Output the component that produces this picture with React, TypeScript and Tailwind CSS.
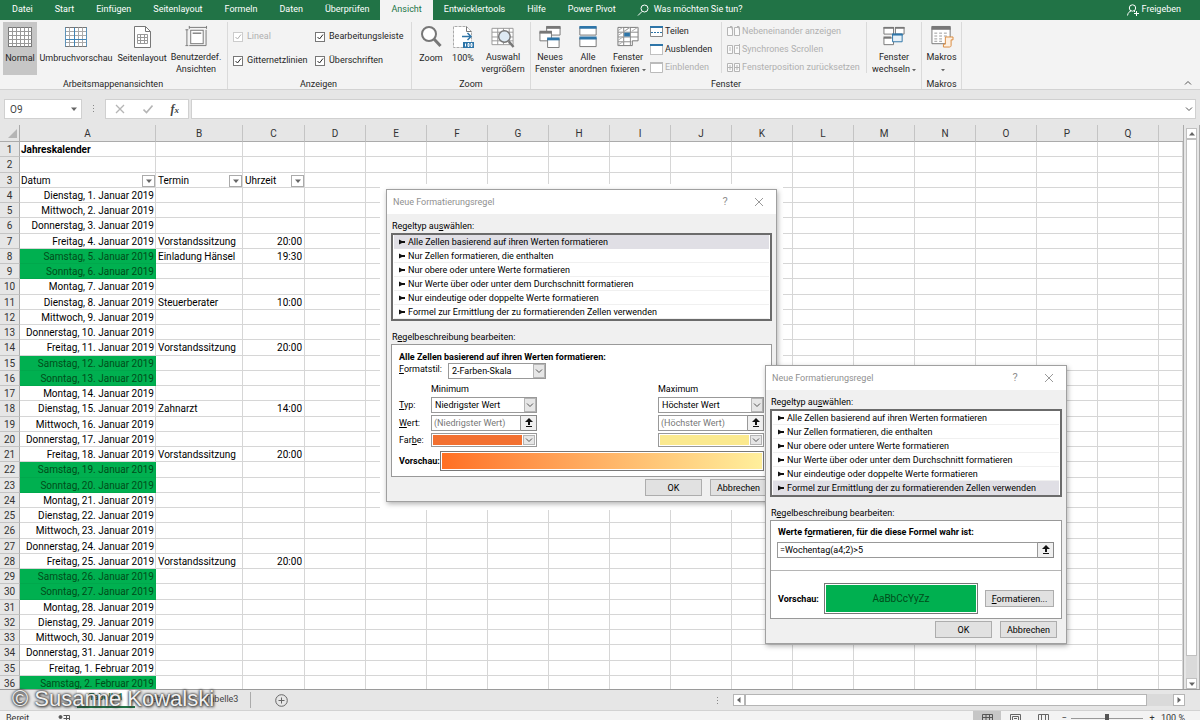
import React from 'react';
import clsx from 'clsx';

const columns = ['A', 'B', 'C', 'D', 'E', 'F', 'G', 'H', 'I', 'J', 'K', 'L', 'M', 'N', 'O', 'P', 'Q'];

interface Entry {
  date: string;
  weekend?: boolean;
  event?: string;
  time?: string;
}

const entries: Entry[] = [
  { date: 'Dienstag, 1. Januar 2019' },
  { date: 'Mittwoch, 2. Januar 2019' },
  { date: 'Donnerstag, 3. Januar 2019' },
  { date: 'Freitag, 4. Januar 2019', event: 'Vorstandssitzung', time: '20:00' },
  { date: 'Samstag, 5. Januar 2019', weekend: true, event: 'Einladung Hänsel', time: '19:30' },
  { date: 'Sonntag, 6. Januar 2019', weekend: true },
  { date: 'Montag, 7. Januar 2019' },
  { date: 'Dienstag, 8. Januar 2019', event: 'Steuerberater', time: '10:00' },
  { date: 'Mittwoch, 9. Januar 2019' },
  { date: 'Donnerstag, 10. Januar 2019' },
  { date: 'Freitag, 11. Januar 2019', event: 'Vorstandssitzung', time: '20:00' },
  { date: 'Samstag, 12. Januar 2019', weekend: true },
  { date: 'Sonntag, 13. Januar 2019', weekend: true },
  { date: 'Montag, 14. Januar 2019' },
  { date: 'Dienstag, 15. Januar 2019', event: 'Zahnarzt', time: '14:00' },
  { date: 'Mittwoch, 16. Januar 2019' },
  { date: 'Donnerstag, 17. Januar 2019' },
  { date: 'Freitag, 18. Januar 2019', event: 'Vorstandssitzung', time: '20:00' },
  { date: 'Samstag, 19. Januar 2019', weekend: true },
  { date: 'Sonntag, 20. Januar 2019', weekend: true },
  { date: 'Montag, 21. Januar 2019' },
  { date: 'Dienstag, 22. Januar 2019' },
  { date: 'Mittwoch, 23. Januar 2019' },
  { date: 'Donnerstag, 24. Januar 2019' },
  { date: 'Freitag, 25. Januar 2019', event: 'Vorstandssitzung', time: '20:00' },
  { date: 'Samstag, 26. Januar 2019', weekend: true },
  { date: 'Sonntag, 27. Januar 2019', weekend: true },
  { date: 'Montag, 28. Januar 2019' },
  { date: 'Dienstag, 29. Januar 2019' },
  { date: 'Mittwoch, 30. Januar 2019' },
  { date: 'Donnerstag, 31. Januar 2019' },
  { date: 'Freitag, 1. Februar 2019' },
  { date: 'Samstag, 2. Februar 2019', weekend: true }
];

const ruleTypes = [
  'Alle Zellen basierend auf ihren Werten formatieren',
  'Nur Zellen formatieren, die enthalten',
  'Nur obere oder untere Werte formatieren',
  'Nur Werte über oder unter dem Durchschnitt formatieren',
  'Nur eindeutige oder doppelte Werte formatieren',
  'Formel zur Ermittlung der zu formatierenden Zellen verwenden'
];

/* ---------- Icons ---------- */

const Icon = ({ children }: { children: React.ReactNode }) => (
  <svg viewBox="0 0 24 24" className="w-6 h-6" fill="none" stroke="#777" strokeWidth="1" aria-hidden="true">
    {children}
  </svg>
);

const NormalIcon = () => (
  <Icon>
    <rect x="0.5" y="2.5" width="23" height="19" fill="#fff" />
    <path d="M4.5 2.5v19M8.5 2.5v19M12.5 2.5v19M16.5 2.5v19M20.5 2.5v19M.5 6.5h23M.5 10.5h23M.5 14.5h23M.5 18.5h23" stroke="#999" />
  </Icon>
);

const PageBreakIcon = () => (
  <Icon>
    <rect x="1.5" y="2.5" width="21" height="19" fill="#fff" />
    <path d="M5.5 2.5v19M14.5 2.5v19M18.5 2.5v19M1.5 6.5h21M1.5 10.5h21M1.5 17.5h21" stroke="#aaa" />
    <path d="M10.5 2.5v19M1.5 14.5h21" stroke="#3f83b5" />
    <path d="M1.5 2.5v19M22.5 2.5v19" stroke="#5d93ba" />
  </Icon>
);

const PageLayoutIcon = () => (
  <Icon>
    <path d="M4.5 1.5h11l5 5v16h-16z" fill="#fff" />
    <path d="M15.5 1.5v5h5" />
    <path d="M7.5 9.5h10v9h-10zM10.5 9.5v9M14.5 9.5v9M7.5 12.5h10M7.5 15.5h10" stroke="#999" />
  </Icon>
);

const CustomViewIcon = () => (
  <Icon>
    <rect x="6.5" y="5.5" width="13" height="14" fill="#fff" />
    <path d="M5 2.5h18M5 1v3M23 1v3M2.5 5v16M1 5h3M1 21.5h3M22.5 5v16.5H5" />
    <path d="M8.5 8.5h9" stroke="#444" />
  </Icon>
);

const ZoomIcon = () => (
  <Icon>
    <circle cx="10" cy="9" r="7" fill="#fff" strokeWidth="2" />
    <path d="M15 14l6.5 7" strokeWidth="3" />
  </Icon>
);

const HundredIcon = () => (
  <Icon>
    <path d="M16.5 22.5h-14v-21h13l5 5v10" fill="#fff" stroke="#aaa" strokeDasharray="3 1" />
    <path d="M15.5 1.5v5h5" />
    <path d="M11 11.5h9M16.5 8l3.5 3.5-3.5 3.5" stroke="#2e75a8" strokeWidth="1.5" />
    <rect x="12" y="17" width="11" height="6" fill="#2e75a8" stroke="none" />
    <path d="M14.5 18.5v3M17 18.5h1v3h-1zM20 18.5h1v3h-1z" stroke="#fff" />
  </Icon>
);

const ZoomSelectionIcon = () => (
  <Icon>
    <path d="M.5 3.5h22v17H.5zM.5 7.5h22M.5 12.5h22M.5 16.5h22M6.5 3.5v17M12.5 3.5v17M18.5 3.5v17" fill="#fff" stroke="#999" />
    <circle cx="13.5" cy="12" r="6" fill="#deeaf3" strokeWidth="1.5" />
    <path d="M18 17l5 6" strokeWidth="2.5" />
  </Icon>
);

const NewWindowIcon = () => (
  <Icon>
    <path d="M8.5 2.5h14v8h-14z" fill="#fff" />
    <path d="M8 2.5h15" strokeWidth="3" />
    <path d="M1.5 7.5h12v9h-12z" fill="#fff" />
    <path d="M1 7.5h13" strokeWidth="3" />
    <path d="M9.5 14.5h12v9h-12z" fill="#fff" />
    <path d="M9 14.5h13" stroke="#2e75a8" strokeWidth="3" />
  </Icon>
);

const ArrangeIcon = () => (
  <Icon>
    <path d="M3.5 2.5h17v8h-17zM3.5 13.5h17v9h-17z" fill="#fff" />
    <path d="M3 2.5h18M3 13.5h18" stroke="#2e75a8" strokeWidth="3" />
  </Icon>
);

const FreezeIcon = () => (
  <Icon>
    <path d="M1.5 2.5h21v14h-6v5h-15z" fill="#fff" />
    <path d="M1.5 7.5h21M1.5 12.5h21M1.5 17.5h14M7.5 2.5v19M14.5 2.5v19" stroke="#888" />
    <path d="M1.5 6l5-3.5M1.5 11l12-8M8 6.5l6-4M16 6.5l6-4M1.5 16l6-4M1.5 21l6-4" stroke="#aaa" />
    <rect x="8" y="8" width="6" height="4" fill="#2e75a8" stroke="none" />
  </Icon>
);

const SwitchIcon = () => (
  <Icon>
    <path d="M1.5 2.5h10v7h-10zM13.5 2.5h9v7h-9zM1.5 13.5h10v7h-10z" fill="#fff" />
    <path d="M1 3h11M13 3h10M1 13h8" strokeWidth="2" />
    <path d="M10.5 9.5h10v8h-10z" fill="#e8f1f8" stroke="#2e75a8" />
    <path d="M10 10h11" stroke="#2e75a8" strokeWidth="2" />
  </Icon>
);

const MacroIcon = () => (
  <Icon>
    <path d="M1.5 2.5h19v17h-19z" fill="#fff" />
    <path d="M1 3h20" strokeWidth="4" />
    <path d="M4 8.5h3M9 8.5h3M14 8.5h3M4 11.5h3M9 11.5h3M14 11.5h3M4 14.5h3M9 14.5h3M4 17h3M9 17h3" stroke="#999" />
    <path d="M15.5 12.5h8v3h-2v6c0 1-1 1.5-2 1.5h-6v-3h2z" fill="#fdf0e2" stroke="#d98a3d" />
  </Icon>
);

const SmallWindowIcon = ({ kind }: { kind: 'split' | 'hide' | 'show' }) => (
  <svg viewBox="0 0 13 11" className="w-[13px] h-[11px] shrink-0" fill="none" stroke={kind === 'show' ? '#bbb' : '#888'} aria-hidden="true">
    <path d="M.5 .5h12v10H.5z" fill="#fff" strokeDasharray={kind === 'hide' ? '1 1' : undefined} />
    <path d="M0 1h13" strokeWidth="2" stroke={kind === 'show' ? '#bbb' : '#2e75a8'} />
    {kind === 'split' && <path d="M1 6.5h11" strokeDasharray="2 1" stroke="#2e75a8" />}
  </svg>
);

const PairIcon = ({ kind }: { kind: 'side' | 'sync' | 'reset' }) => (
  <svg viewBox="0 0 13 11" className="w-[13px] h-[11px] shrink-0" fill="none" stroke="#b5b5b5" aria-hidden="true">
    <path d="M.5 1.5h5v8h-5zM7.5 1.5h5v8h-5z" fill="#fafafa" />
    {kind === 'side' && <path d="M3 .5h2v3M10 .5h2v3" />}
    {kind === 'sync' && <path d="M2 4h2M2 6h2M9 4h2M12.5 0v11" />}
    {kind === 'reset' && <path d="M0 5.5h5M7 5.5h6M3 3v5M10 3v5" />}
  </svg>
);

const Chevron = ({ className }: { className?: string }) => (
  <svg viewBox="0 0 8 8" className={clsx('w-2 h-2 text-[#555]', className)} fill="none" stroke="currentColor" aria-hidden="true">
    <path d="M1 2.5l3 3 3-3" />
  </svg>
);

const Triangle = ({ className, small }: { className?: string; small?: boolean }) => (
  <svg viewBox="0 0 6 6" className={clsx('inline-block', small ? 'w-1 h-1' : 'w-1.5 h-1.5', className)} fill="#666" aria-hidden="true">
    <path d="M0 1.5h6l-3 3.5z" />
  </svg>
);

const RefIcon = () => (
  <svg viewBox="0 0 10 10" className="w-2.5 h-2.5" fill="#111" aria-hidden="true">
    <path d="M5 0l4 4H6v3H4V4H1zM2 8h6v1H2z" />
  </svg>
);

/* ---------- Ribbon ---------- */

const tabs = ['Datei', 'Start', 'Einfügen', 'Seitenlayout', 'Formeln', 'Daten', 'Überprüfen', 'Ansicht', 'Entwicklertools', 'Hilfe', 'Power Pivot'];

const TabBar = () => (
  <nav className="h-5 shrink-0 flex items-stretch bg-[#217346] text-white text-[9px] pl-px">
    {tabs.map((tab) => (
      <button
        key={tab}
        className={clsx('px-[11px] pb-px whitespace-nowrap', tab === 'Ansicht' && 'bg-[#f3f3f3] text-[#217346]')}
      >
        {tab}
      </button>
    ))}
    <button className="flex items-center gap-[5px] px-[10px] pb-px whitespace-nowrap">
      <svg viewBox="0 0 12 12" className="w-3 h-3" fill="none" stroke="currentColor" aria-hidden="true">
        <circle cx="7.5" cy="4.5" r="3.5" />
        <path d="M5 7.5l-4 4" />
      </svg>
      Was möchten Sie tun?
    </button>
    <button className="ml-auto mr-[9px] px-[10px] pb-px flex items-center gap-[3px]">
      <svg viewBox="0 0 12 12" className="w-3 h-3" fill="none" stroke="currentColor" aria-hidden="true">
        <circle cx="5.5" cy="4" r="3.2" />
        <path d="M.5 11.5c.5-3 2-4 3.5-4.5M7 7l1 1M9.5 7v5M7 9.5h5" />
      </svg>
      Freigeben
    </button>
  </nav>
);

interface BigButtonProps {
  icon: React.ReactNode;
  lines: string[];
  width: string;
  active?: boolean;
  menu?: boolean;
}

const BigButton = ({ icon, lines, width, active, menu }: BigButtonProps) => (
  <button className={clsx('h-[53px] pt-[3px] flex flex-col items-center shrink-0', width, active && 'bg-[#c6c6c6]')}>
    {icon}
    <span className="pt-[3px] leading-3 whitespace-nowrap">
      {lines[0]}
      {(lines[1] || menu) && <br />}
      {lines[1]}
      {menu && <Triangle small className="ml-[2px]" />}
    </span>
  </button>
);

const Group = ({ label, children, className }: { label: string; children: React.ReactNode; className?: string }) => (
  <section className={clsx('flex flex-col border-r border-[#dadada] mt-[2px]', className)}>
    <div className="flex h-[57px]">{children}</div>
    <div className="text-center leading-[10px]">{label}</div>
  </section>
);

const Check = ({ label, disabled }: { label: string; disabled?: boolean }) => (
  <label className={clsx('flex items-center gap-1 h-3 whitespace-nowrap', disabled && 'text-[#b0b0b0]')}>
    <span className="relative flex">
      <input
        type="checkbox"
        defaultChecked
        disabled={disabled}
        className="appearance-none w-[10px] h-[10px] border border-[#777] bg-white disabled:border-[#ccc]"
      />
      <svg viewBox="0 0 10 10" className="absolute inset-0 w-[10px] h-[10px] pointer-events-none" fill="none" stroke="currentColor" aria-hidden="true">
        <path d="M2.5 5l2 2 3.5-4.5" />
      </svg>
    </span>
    {label}
  </label>
);

const Ribbon = () => (
  <div className="h-[70px] shrink-0 flex bg-[#f3f3f3] border-b border-[#d2d2d2] text-[9px] text-[#262626]">
    <Group label="Arbeitsmappenansichten" className="pl-[3px] pr-[4px]">
      <BigButton icon={<NormalIcon />} lines={['Normal']} width="w-[34px]" active />
      <BigButton icon={<PageBreakIcon />} lines={['Umbruchvorschau']} width="w-[78px]" />
      <BigButton icon={<PageLayoutIcon />} lines={['Seitenlayout']} width="w-[54px]" />
      <BigButton icon={<CustomViewIcon />} lines={['Benutzerdef.', 'Ansichten']} width="w-[54px]" />
    </Group>
    <Group label="Anzeigen" className="pl-[5px] pr-[7px]">
      <div className="grid grid-cols-[82px_89px] gap-y-3 content-start pt-[9px]">
        <Check label="Lineal" disabled />
        <Check label="Bearbeitungsleiste" />
        <Check label="Gitternetzlinien" />
        <Check label="Überschriften" />
      </div>
    </Group>
    <Group label="Zoom" className="px-[2px]">
      <BigButton icon={<ZoomIcon />} lines={['Zoom']} width="w-[34px]" />
      <BigButton icon={<HundredIcon />} lines={['100%']} width="w-[30px]" />
      <BigButton icon={<ZoomSelectionIcon />} lines={['Auswahl', 'vergrößern']} width="w-[50px]" />
    </Group>
    <Group label="Fenster">
      <BigButton icon={<NewWindowIcon />} lines={['Neues', 'Fenster']} width="w-[38px]" />
      <BigButton icon={<ArrangeIcon />} lines={['Alle', 'anordnen']} width="w-[38px]" />
      <BigButton icon={<FreezeIcon />} lines={['Fenster', 'fixieren']} width="w-[42px]" menu />
      <div className="w-[73px] h-[51px] pl-[1px] flex flex-col justify-between border-r border-[#dadada] pt-[3px]">
        <button className="flex items-center gap-[2px] leading-3"><SmallWindowIcon kind="split" />Teilen</button>
        <button className="flex items-center gap-[2px] leading-3"><SmallWindowIcon kind="hide" />Ausblenden</button>
        <button disabled className="flex items-center gap-[2px] leading-3 text-[#b0b0b0]"><SmallWindowIcon kind="show" />Einblenden</button>
      </div>
      <div className="w-[145px] h-[51px] pl-[5px] flex flex-col justify-between border-r border-[#dadada] pt-[3px] text-[#b0b0b0] whitespace-nowrap">
        <button disabled className="flex items-center gap-[2px] leading-3"><PairIcon kind="side" />Nebeneinander anzeigen</button>
        <button disabled className="flex items-center gap-[2px] leading-3"><PairIcon kind="sync" />Synchrones Scrollen</button>
        <button disabled className="flex items-center gap-[2px] leading-3"><PairIcon kind="reset" />Fensterposition zurücksetzen</button>
      </div>
      <BigButton icon={<SwitchIcon />} lines={['Fenster', 'wechseln']} width="w-[54px]" menu />
    </Group>
    <Group label="Makros">
      <BigButton icon={<MacroIcon />} lines={['Makros']} width="w-[39px]" menu />
    </Group>
    <button aria-label="Menüband reduzieren" className="ml-auto self-end mr-[8px] mb-[2px]">
      <Chevron className="rotate-180" />
    </button>
  </div>
);

const FormulaBar = () => (
  <div className="h-[35px] shrink-0 flex items-start pt-[9px] px-1 bg-[#e6e6e6] text-[#444]">
    <div className="relative w-[78px] shrink-0">
      <input aria-label="Namenfeld" defaultValue="O9" className="block w-full h-5 px-[5px] bg-white border border-[#d0d0d0] text-[10px]" />
      <Triangle className="absolute right-[5px] top-[7px]" />
    </div>
    <span className="w-[23px] shrink-0 flex flex-col items-center gap-[2px] pt-[6px]">
      <i className="w-px h-px bg-[#888]" />
      <i className="w-px h-px bg-[#888]" />
      <i className="w-px h-px bg-[#888]" />
    </span>
    <div className="w-[84px] h-5 shrink-0 flex items-center justify-around bg-white border border-[#d0d0d0]">
      <button aria-label="Abbrechen">
        <svg viewBox="0 0 10 10" className="w-2.5 h-2.5" fill="none" stroke="#b5b5b5" strokeWidth="1.3" aria-hidden="true">
          <path d="M1 1l8 8M9 1l-8 8" />
        </svg>
      </button>
      <button aria-label="Eingeben">
        <svg viewBox="0 0 10 10" className="w-2.5 h-2.5" fill="none" stroke="#b5b5b5" strokeWidth="1.6" aria-hidden="true">
          <path d="M.5 5.5l3 3 6-7" />
        </svg>
      </button>
      <button className="font-['Liberation_Serif',serif] italic font-bold text-[12px] leading-none">
        f<span className="text-[9px]">x</span>
      </button>
    </div>
    <div className="relative flex-1 ml-[2px]">
      <input aria-label="Bearbeitungsleiste" className="block w-full h-5 px-1 bg-white border border-[#d0d0d0] text-[10px]" />
      <Chevron className="absolute right-[3px] top-[6px]" />
    </div>
  </div>
);

/* ---------- Sheet ---------- */

const FilterHead = ({ label }: { label: string }) => (
  <div className="flex items-center justify-between">
    {label}
    <button aria-label={`${label} filtern`} className="w-[13px] h-3 flex items-center justify-center bg-white border border-[#ababab]">
      <Triangle />
    </button>
  </div>
);

const cell = 'pt-[2px] border-r border-b border-[#d6d6d6] whitespace-nowrap leading-3';
const rowHead = 'pt-[2px] border-r border-b border-[#c4c4c4] border-r-[#ababab] bg-[#e6e6e6] font-normal text-[#333] leading-3';
const colHead = 'h-[17px] pt-px border-r border-b border-[#ababab] border-r-[#c4c4c4] font-normal leading-[14px] text-[#333]';

const Row = ({ number, a, b, c, green }: { number: number; a?: React.ReactNode; b?: React.ReactNode; c?: React.ReactNode; green?: boolean }) => (
  <tr>
    <th scope="row" className={rowHead}>{number}</th>
    <td className={clsx(cell, 'pl-px', number > 3 && 'pr-px text-right', green && 'bg-[#00b050] border-[#00a84c]! text-[#004d1a]')}>{a}</td>
    <td className={clsx(cell, 'pl-[2px]')}>{b}</td>
    <td className={clsx(cell, 'pl-[2px]', number > 3 && 'pr-[2px] text-right')}>{c}</td>
    {columns.slice(3).map((col) => (
      <td key={col} className={cell} />
    ))}
    <td className={cell} />
  </tr>
);

const Sheet = () => (
  <div className="flex-1 min-h-0 flex bg-[#e6e6e6]">
    <div className="flex-1 min-w-0 overflow-hidden border-r border-[#ababab]">
      <table className="w-full h-[calc(100%+2px)] table-fixed border-separate border-spacing-0 bg-white text-[10px] text-black">
        <colgroup>
          <col className="w-5" />
          <col className="w-[136px]" />
          <col className="w-[87px]" />
          <col className="w-[62px]" />
          {columns.slice(3).map((col) => (
            <col key={col} className="w-[61px]" />
          ))}
          <col />
        </colgroup>
        <thead>
          <tr className="bg-[#e6e6e6]">
            <th className="h-[17px] p-0 border-r border-b border-[#ababab]">
              <svg viewBox="0 0 18 14" className="w-[18px] h-[14px] ml-auto" fill="#b5b5b5" aria-hidden="true">
                <path d="M16 3v9H7z" />
              </svg>
            </th>
            {columns.map((col) => (
              <th key={col} scope="col" className={colHead}>
                {col}
              </th>
            ))}
            <th className="h-[17px] p-0 border-b border-[#ababab]" />
          </tr>
        </thead>
        <tbody>
          <Row number={1} a={<b>Jahreskalender</b>} />
          <Row number={2} />
          <Row number={3} a={<FilterHead label="Datum" />} b={<FilterHead label="Termin" />} c={<FilterHead label="Uhrzeit" />} />
          {entries.map((entry, i) => (
            <Row key={entry.date} number={i + 4} a={entry.date} b={entry.event} c={entry.time} green={entry.weekend} />
          ))}
        </tbody>
      </table>
    </div>
    <div className="w-4 shrink-0 flex flex-col items-center pt-[3px] border-r border-[#ababab]">
      <button aria-label="Nach oben" className="w-[11px] h-[11px] flex items-center justify-center bg-white border border-[#c0c0c0]">
        <Triangle className="rotate-180" />
      </button>
      <div className="w-[11px] flex-1 bg-[#dadada]">
        <div className="h-[96%] bg-white border border-[#c0c0c0]" />
      </div>
      <button aria-label="Nach unten" className="w-[11px] h-[11px] flex items-center justify-center bg-white border border-[#c0c0c0]">
        <Triangle />
      </button>
    </div>
  </div>
);

const SheetTabs = () => (
  <div className="relative h-[21px] shrink-0 flex items-stretch bg-[#e6e6e6] border-t border-[#9a9a9a] text-[9px] text-[#444]">
    <button className="ml-[77px] w-[58px] bg-white border-b-2 border-[#217346] text-[#217346] font-bold mb-[2px]">Tabelle1</button>
    <button className="w-[58px]">Tabelle2</button>
    <button className="w-[58px] border-r border-[#ababab] my-[2px]">Tabelle3</button>
    <button aria-label="Neues Blatt" className="ml-[24px]">
      <svg viewBox="0 0 13 13" className="w-[13px] h-[13px]" fill="none" stroke="#666" aria-hidden="true">
        <circle cx="6.5" cy="6.5" r="5.8" />
        <path d="M6.5 3.5v6M3.5 6.5h6" />
      </svg>
    </button>
    <div className="ml-auto mr-[15px] w-[39%] flex items-center">
      <span className="flex flex-col gap-[2px] w-[16px]">
        <i className="w-px h-px bg-[#888]" />
        <i className="w-px h-px bg-[#888]" />
        <i className="w-px h-px bg-[#888]" />
      </span>
      <button aria-label="Nach links" className="w-3 h-3 flex items-center justify-center bg-white border border-[#b5b5b5]">
        <Triangle className="rotate-90" />
      </button>
      <div className="flex-1 h-3 bg-[#dadada]">
        <div className="w-[94%] h-3 bg-white border border-[#b5b5b5]" />
      </div>
      <button aria-label="Nach rechts" className="w-3 h-3 flex items-center justify-center bg-white border border-[#b5b5b5]">
        <Triangle className="-rotate-90" />
      </button>
    </div>
    <span className="absolute left-[12px] -top-[3px] text-[22px] leading-6 text-[#f0f0f0] whitespace-nowrap font-['Liberation_Sans',sans-serif] [text-shadow:0_0_3px_#333,1px_1px_3px_#333,0_0_2px_#555]">
      © Susanne Kowalski
    </span>
  </div>
);

const StatusBar = () => (
  <footer className="h-4 -mb-1.5 shrink-0 flex items-center px-[6px] bg-[#f3f3f3] border-t border-[#d2d2d2] text-[9px] text-[#333]">
    Bereit
    <svg viewBox="0 0 12 10" className="w-3 h-2.5 ml-[29px]" fill="none" stroke="#555" aria-hidden="true">
      <circle cx="2.5" cy="3" r="1.5" fill="#555" />
      <path d="M5.5 1.5h6v8h-8V6M5.5 4.5h6M8.5 2v7" />
    </svg>
    <div className="ml-auto mr-[9px] h-full flex items-center">
      <button aria-label="Normal" className="w-7 h-full flex items-center justify-center bg-[#c6c6c6]">
        <svg viewBox="0 0 11 10" className="w-[11px] h-[10px]" fill="none" stroke="#555" aria-hidden="true">
          <path d="M.5 .5h10v9H.5zM.5 3.5h10M.5 6.5h10M4 .5v9M7.5 .5v9" />
        </svg>
      </button>
      <button aria-label="Seitenlayout" className="w-7 h-full flex items-center justify-center">
        <svg viewBox="0 0 11 10" className="w-[11px] h-[10px]" fill="none" stroke="#666" aria-hidden="true">
          <path d="M.5 .5h10v9H.5zM2.5 2.5h6v7M2.5 2.5v7M4 4.5h3M4 6.5h3" />
        </svg>
      </button>
      <button aria-label="Umbruchvorschau" className="w-7 h-full flex items-center justify-center">
        <svg viewBox="0 0 11 10" className="w-[11px] h-[10px]" fill="none" stroke="#666" aria-hidden="true">
          <path d="M.5 .5h10v9H.5zM3.5 .5v6h4v-6" />
        </svg>
      </button>
      <span className="w-[14px] text-center">−</span>
      <input
        type="range"
        aria-label="Zoom"
        className="appearance-none w-[72px] h-px bg-[#999] [&::-webkit-slider-thumb]:appearance-none [&::-webkit-slider-thumb]:w-[4px] [&::-webkit-slider-thumb]:h-[10px] [&::-webkit-slider-thumb]:bg-[#555]"
      />
      <span className="w-[18px] text-center">+</span>
      <span className="whitespace-nowrap">100 %</span>
    </div>
  </footer>
);

/* ---------- Dialogs ---------- */

const DialogButton = ({ children, className }: { children: React.ReactNode; className?: string }) => (
  <button className={clsx('h-[17px] bg-[#e1e1e1] border border-[#adadad] whitespace-nowrap', className)}>{children}</button>
);

const SelectBox = ({ label, value, className }: { label: string; value: string; className?: string }) => (
  <div className={clsx('relative h-4', className)}>
    <select aria-label={label} className="appearance-none block w-full h-4 pl-[3px] leading-[14px] bg-white border border-[#999]">
      <option>{value}</option>
    </select>
    <span className="absolute right-px top-px bottom-px w-3 flex items-center justify-center bg-[#e6e6e6] border border-[#b5b5b5] pointer-events-none">
      <Chevron />
    </span>
  </div>
);

const RefInput = ({ label, value, disabled }: { label: string; value: string; disabled?: boolean }) => (
  <div className="flex h-4">
    <input
      aria-label={label}
      defaultValue={value}
      disabled={disabled}
      className="flex-1 min-w-0 h-4 pl-[2px] bg-white border border-[#999] disabled:text-[#777]"
    />
    <button aria-label={`${label} auswählen`} className="w-4 flex items-center justify-center bg-[#f0f0f0] border border-l-0 border-[#888]">
      <RefIcon />
    </button>
  </div>
);

const ColorSelect = ({ label, color }: { label: string; color: string }) => (
  <button aria-label={label} className="h-[14px] p-px flex gap-px bg-white border border-[#999]">
    <span className={clsx('flex-1 h-[10px]', color)} />
    <span className="w-3 h-[10px] flex items-center justify-center bg-[#e6e6e6] border border-[#b5b5b5]">
      <Chevron />
    </span>
  </button>
);

interface RuleDialogProps {
  selected: number;
  className?: string;
  children: React.ReactNode;
}

const RuleDialog = ({ selected, className, children }: RuleDialogProps) => (
  <div role="dialog" aria-label="Neue Formatierungsregel" className={clsx('bg-[#f0f0f0] border border-[#a0a0a0] shadow-[1px_2px_5px_rgba(0,0,0,0.3)] text-[9px] leading-3 text-black', className)}>
    <header className="h-[24px] flex items-center pl-[6px] pr-[12px] bg-white text-[#909090]">
      Neue Formatierungsregel
      <button aria-label="Hilfe" className="ml-auto w-3 text-[11px]">?</button>
      <button aria-label="Schließen" className="ml-[23px]">
        <svg viewBox="0 0 10 10" className="w-2.5 h-2.5" fill="none" stroke="#999" aria-hidden="true">
          <path d="M1 1l8 8M9 1l-8 8" />
        </svg>
      </button>
    </header>
    <div className="px-1 pb-[5px]">
      <div className="pt-[6px] h-[19px] pl-px">Regeltyp au<u>s</u>wählen:</div>
      <ul className="border-2 border-[#6b6b6b] bg-white px-px">
        {ruleTypes.map((rule, i) => (
          <li
            key={rule}
            className={clsx('h-[14px] flex items-center gap-[3px] pl-[5px] whitespace-nowrap', i === selected ? 'bg-[#e0dfe5]' : 'border-b border-[#f0f0f0]')}
          >
            <svg viewBox="0 0 6 6" className="w-1.5 h-1.5" fill="#111" aria-hidden="true">
              <path d="M0 .5l3 1.5H6v2H3L0 5.5z" />
            </svg>
            {rule}
          </li>
        ))}
      </ul>
      <div className="pt-[10px] h-[23px] pl-px">R<u>e</u>gelbeschreibung bearbeiten:</div>
      {children}
      <div className="pt-[2px] flex justify-end gap-2 pr-[5px]">
        <DialogButton className="w-[57px]">OK</DialogButton>
        <DialogButton className="w-[57px]">Abbrechen</DialogButton>
      </div>
    </div>
  </div>
);

const ColorScaleDialog = () => (
  <RuleDialog selected={0} className="w-[391px]">
    <div className="bg-white border border-[#999] px-[7px] pt-[6px] pb-[5px]">
      <div className="font-bold">Alle Zellen basierend auf ihren Werten formatieren:</div>
      <div className="flex gap-[7px] h-4">
        <span className="w-[42px]"><u>F</u>ormatstil:</span>
        <SelectBox label="Formatstil" value="2-Farben-Skala" className="w-[98px]" />
      </div>
      <div className="grid grid-cols-[32px_106px_1fr_106px] gap-y-[2px] items-center pt-[4px]">
        <span />
        <span>Minimum</span>
        <span />
        <span>Maximum</span>
        <span><u>T</u>yp:</span>
        <SelectBox label="Typ Minimum" value="Niedrigster Wert" />
        <span />
        <SelectBox label="Typ Maximum" value="Höchster Wert" />
        <span><u>W</u>ert:</span>
        <RefInput label="Wert Minimum" value="(Niedrigster Wert)" disabled />
        <span />
        <RefInput label="Wert Maximum" value="(Höchster Wert)" disabled />
        <span>Far<u>b</u>e:</span>
        <ColorSelect label="Farbe Minimum" color="bg-[#f27030]" />
        <span />
        <ColorSelect label="Farbe Maximum" color="bg-[#fbe98e]" />
      </div>
      <div className="flex items-center pt-[4px] font-bold">
        <span className="w-[41px]">Vorschau:</span>
        <div className="flex-1 h-5 p-px border border-[#777]">
          <div className="h-full bg-linear-to-r from-[#ff6f22] to-[#ffef9c]" />
        </div>
      </div>
    </div>
  </RuleDialog>
);

const FormulaDialog = () => (
  <RuleDialog selected={5} className="w-[302px]">
    <div className="bg-white border border-[#999] pt-[5px] pb-1">
      <div className="px-[7px] font-bold">Werte f<u>o</u>rmatieren, für die diese Formel wahr ist:</div>
      <div className="pl-[6px] pr-[7px] pt-1 pb-[12px]">
        <RefInput label="Formel" value="=Wochentag(a4;2)>5" />
      </div>
      <div className="border-t border-[#b5b5b5] pt-[12px] pl-[7px] pr-[7px] flex items-center">
        <span className="w-[46px] font-bold">Vorschau:</span>
        <div className="flex-1 h-[31px] p-px border border-[#777]">
          <div className="h-full flex items-center justify-center bg-[#00b050] text-[#004d1a] text-[10px]">AaBbCcYyZz</div>
        </div>
        <DialogButton className="w-[69px] ml-[7px]"><u>F</u>ormatieren...</DialogButton>
      </div>
    </div>
  </RuleDialog>
);

const App = () => (
  <div className="relative h-screen overflow-hidden flex flex-col bg-[#e6e6e6] font-[Roboto,'Noto_Sans',sans-serif]">
    <TabBar />
    <Ribbon />
    <FormulaBar />
    <Sheet />
    <SheetTabs />
    <StatusBar />
    <div className="absolute left-[380px] top-[184px] bg-white px-[6px] pt-[5px] pb-2">
      <ColorScaleDialog />
    </div>
    <div className="absolute left-[765px] top-[365px]">
      <FormulaDialog />
    </div>
  </div>
);

export default App;
